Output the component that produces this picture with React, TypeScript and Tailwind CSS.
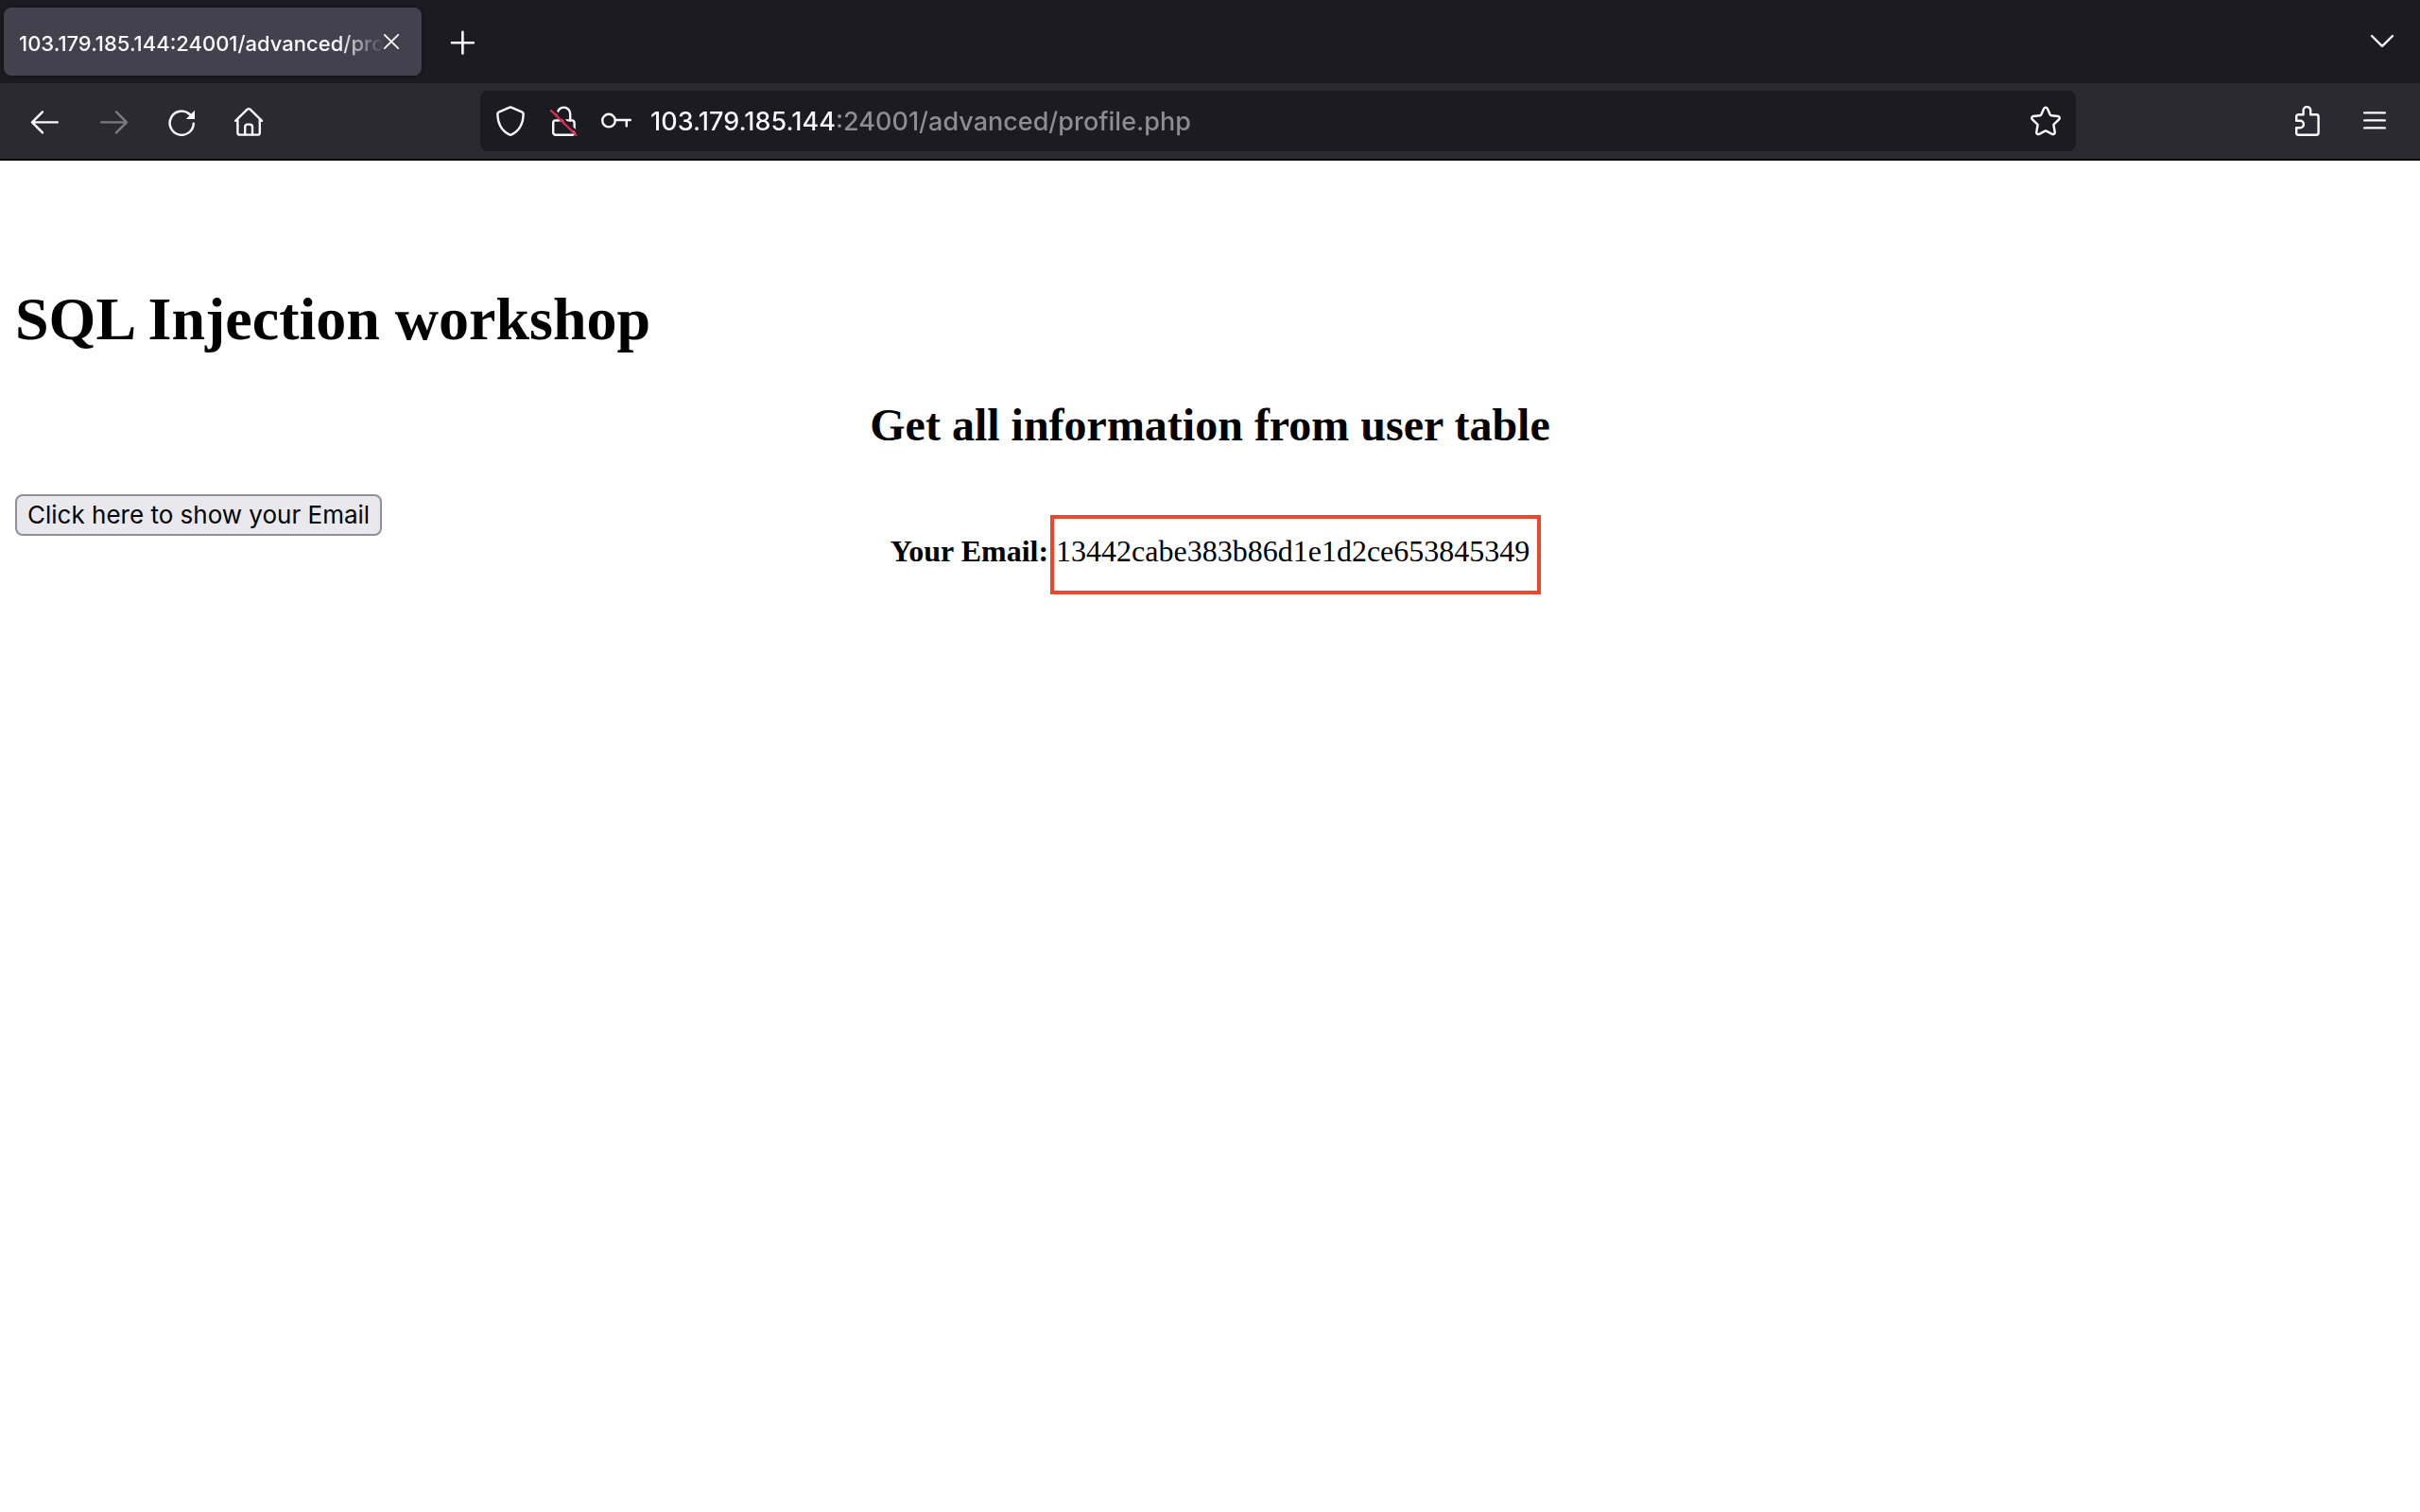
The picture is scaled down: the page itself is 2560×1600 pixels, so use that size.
import React from "react";

type IconProps = { children: React.ReactNode; className?: string };

function Icon({ children, className = "size-8" }: IconProps) {
  return (
    <svg
      viewBox="0 0 16 16"
      className={className}
      fill="none"
      stroke="currentColor"
      strokeWidth={1.2}
      strokeLinecap="round"
      strokeLinejoin="round"
      aria-hidden="true"
    >
      {children}
    </svg>
  );
}

type ToolButtonProps = { label: string; disabled?: boolean; children: React.ReactNode };

function ToolButton({ label, disabled, children }: ToolButtonProps) {
  return (
    <button
      type="button"
      aria-label={label}
      disabled={disabled}
      className="flex h-16 w-[72px] items-center justify-center rounded-lg text-[#fbfbfe] disabled:text-[#7c7b82]"
    >
      <Icon>{children}</Icon>
    </button>
  );
}

function TabStrip() {
  return (
    <div className="flex h-[88px] items-center bg-[#1c1b22] pr-6 pl-1">
      <div className="flex h-[72px] w-[442px] items-center rounded-lg bg-[#42414d] pr-6 pl-4 shadow-[0_0_4px_rgba(0,0,0,0.5)]">
        <span className="min-w-0 flex-1 overflow-hidden pt-1 text-[22px] leading-8 font-medium whitespace-nowrap [mask-image:linear-gradient(to_left,transparent,black_48px)]">
          103.179.185.144:24001/advanced/profile.php
        </span>
        <button type="button" aria-label="Close tab" className="flex size-4 items-center justify-center">
          <Icon className="size-4">
            <path d="M.8.8l14.400 14.400M15.200.8L.8 15.200" strokeWidth={1.8} />
          </Icon>
        </button>
      </div>
      <button type="button" aria-label="New tab" className="ml-7 flex size-8 items-center justify-center">
        <Icon>
          <path d="M7.700 2.900v11.400M2 8.600h11.400" strokeWidth={1.3} />
        </Icon>
      </button>
      <button type="button" aria-label="List all tabs" className="ml-auto flex size-8 items-center justify-center">
        <Icon>
          <path d="M2.500 5L8 10.400 13.500 5" />
        </Icon>
      </button>
    </div>
  );
}

function AddressBar() {
  return (
    <div className="flex h-16 flex-1 items-center gap-6 rounded-lg bg-[#1c1b22] px-4">
      <button type="button" aria-label="Tracking protection">
        <Icon>
          <path d="M7.600.8a1 1 0 0 1 .8 0l5.800 2.500c.4.200.6.500.6.900 0 4.900-1.800 8.700-6.200 11a1.300 1.300 0 0 1-1.200 0C3 12.900 1.200 9.100 1.200 4.200c0-.4.200-.7.600-.9z" />
        </Icon>
      </button>
      <button type="button" aria-label="Connection is not secure">
        <Icon>
          <path d="M4.800 7.800V4.200a3.400 3.400 0 0 1 6.800 0v3.600" />
          <rect x="2.600" y="7.700" width="11.200" height="7.700" rx="1.300" />
          <path d="M2.400 1.600L15.600 14.400" stroke="#1c1b22" strokeWidth={1.2} strokeLinecap="butt" />
          <path d="M4.800 4.900v2.200" stroke="#1c1b22" strokeWidth={1.6} strokeLinecap="butt" />
          <path d="M1.500 2.500L14.700 15.500" stroke="#e22850" />
        </Icon>
      </button>
      <button type="button" aria-label="Saved logins">
        <Icon>
          <circle cx="4" cy="7.800" r="3.400" />
          <path d="M7.400 7.500h8M13.400 7.500v3.200" />
        </Icon>
      </button>
      <input
        type="text"
        aria-label="Address"
        defaultValue="103.179.185.144:24001/advanced/profile.php"
        className="-ml-1 min-w-0 flex-1 bg-[linear-gradient(to_right,#fbfbfe_195px,#8e8d93_195px)] bg-clip-text pt-0.5 text-[27px] leading-10 font-medium text-transparent caret-white outline-none"
      />
      <button type="button" aria-label="Bookmark this page">
        <Icon>
          <path d="M7.100 1.400a1 1 0 0 1 1.800 0l1.500 3.300a.7.700 0 0 0 .6.400l3.500.4a.95.950 0 0 1 .550 1.650l-2.600 2.500a.7.700 0 0 0-.2.700l.6 3.550a1 1 0 0 1-1.450 1.050L8.350 13.300a.7.700 0 0 0-.7 0L4.600 14.950a1 1 0 0 1-1.450-1.050l.6-3.550a.7.700 0 0 0-.2-.7L.950 7.150A.95.950 0 0 1 1.500 5.500l3.500-.4a.7.700 0 0 0 .6-.4z" />
        </Icon>
      </button>
    </div>
  );
}

function Toolbar() {
  return (
    <div className="flex h-[82px] items-center border-b-2 border-[#0c0c0d] bg-[#2b2a33] px-3">
      <div className="flex">
        <ToolButton label="Back">
          <path d="M14.400 8.700H1.200M6.500 3.200L1 8.700l5.500 5.500" />
        </ToolButton>
        <ToolButton label="Forward" disabled>
          <path d="M1.600 8.700h13.200M9.500 3.200L15 8.700l-5.500 5.500" />
        </ToolButton>
        <ToolButton label="Reload">
          <path d="M14.400 9.300a6.300 6.300 0 1 1-2-4.800" />
          <path d="M15 2.400V7h-4.600z" fill="currentColor" stroke="none" />
        </ToolButton>
        <ToolButton label="Home">
          <path d="M.6 7.900L6.700 1.900a1.200 1.200 0 0 1 1.700 0l6.100 6M1.700 7.200v7a1.100 1.100 0 0 0 1.100 1.100h9.500a1.100 1.100 0 0 0 1.100-1.100v-7" />
          <path d="M5.600 15.200v-4a1.400 1.400 0 0 1 1.400-1.400h1.100a1.400 1.400 0 0 1 1.400 1.400v4" />
        </ToolButton>
      </div>
      <div className="flex flex-1 px-[208px]">
        <AddressBar />
      </div>
      <div className="flex">
        <ToolButton label="Extensions">
          <path d="M2.600 7.900V5.700a1.100 1.100 0 0 1 1.100-1.100h2.600V2.400a1.900 1.900 0 0 1 3.800 0v2.200h3.100a1.100 1.100 0 0 1 1.100 1.100v8.600a1.100 1.100 0 0 1-1.100 1.100H3.700a1.100 1.100 0 0 1-1.100-1.100v-2.700h2a1.800 1.800 0 0 0 0-3.700z" />
        </ToolButton>
        <ToolButton label="Open application menu">
          <path d="M2.600 3.700h10.800M2.600 7.700h10.800M2.600 11.700h10.800" />
        </ToolButton>
      </div>
    </div>
  );
}

function Page() {
  return (
    <main className="flex-1 bg-white px-4 pt-32 font-['Liberation_Serif',serif] text-black">
      <h1 className="text-[64px] leading-[80px] font-bold">SQL Injection workshop</h1>
      <h2 className="mt-11 text-center text-5xl leading-[56px] font-bold">Get all information from user table</h2>
      <div className="mt-[45px] grid grid-cols-[1fr_auto_1fr] items-start">
        <button
          type="button"
          className="h-11 justify-self-start rounded-lg border-2 border-[#8f8f9d] bg-[#e9e9ed] px-[11px] font-[Inter,sans-serif] text-[26px] leading-10"
        >
          Click here to show your Email
        </button>
        <p className="mt-[42px] text-[32px] leading-9">
          <b>Your Email:</b>{" "}
          <span className="relative">
            13442cabe383b86d1e1d2ce653845349
            <span className="pointer-events-none absolute -top-5 -right-3 -bottom-7 -left-1.5 border-4 border-[#ec4728]" />
          </span>
        </p>
      </div>
    </main>
  );
}

export default function App() {
  return (
    <div className="flex min-h-screen flex-col font-[Inter,sans-serif] text-[#fbfbfe]">
      <header>
        <TabStrip />
        <Toolbar />
      </header>
      <Page />
    </div>
  );
}
